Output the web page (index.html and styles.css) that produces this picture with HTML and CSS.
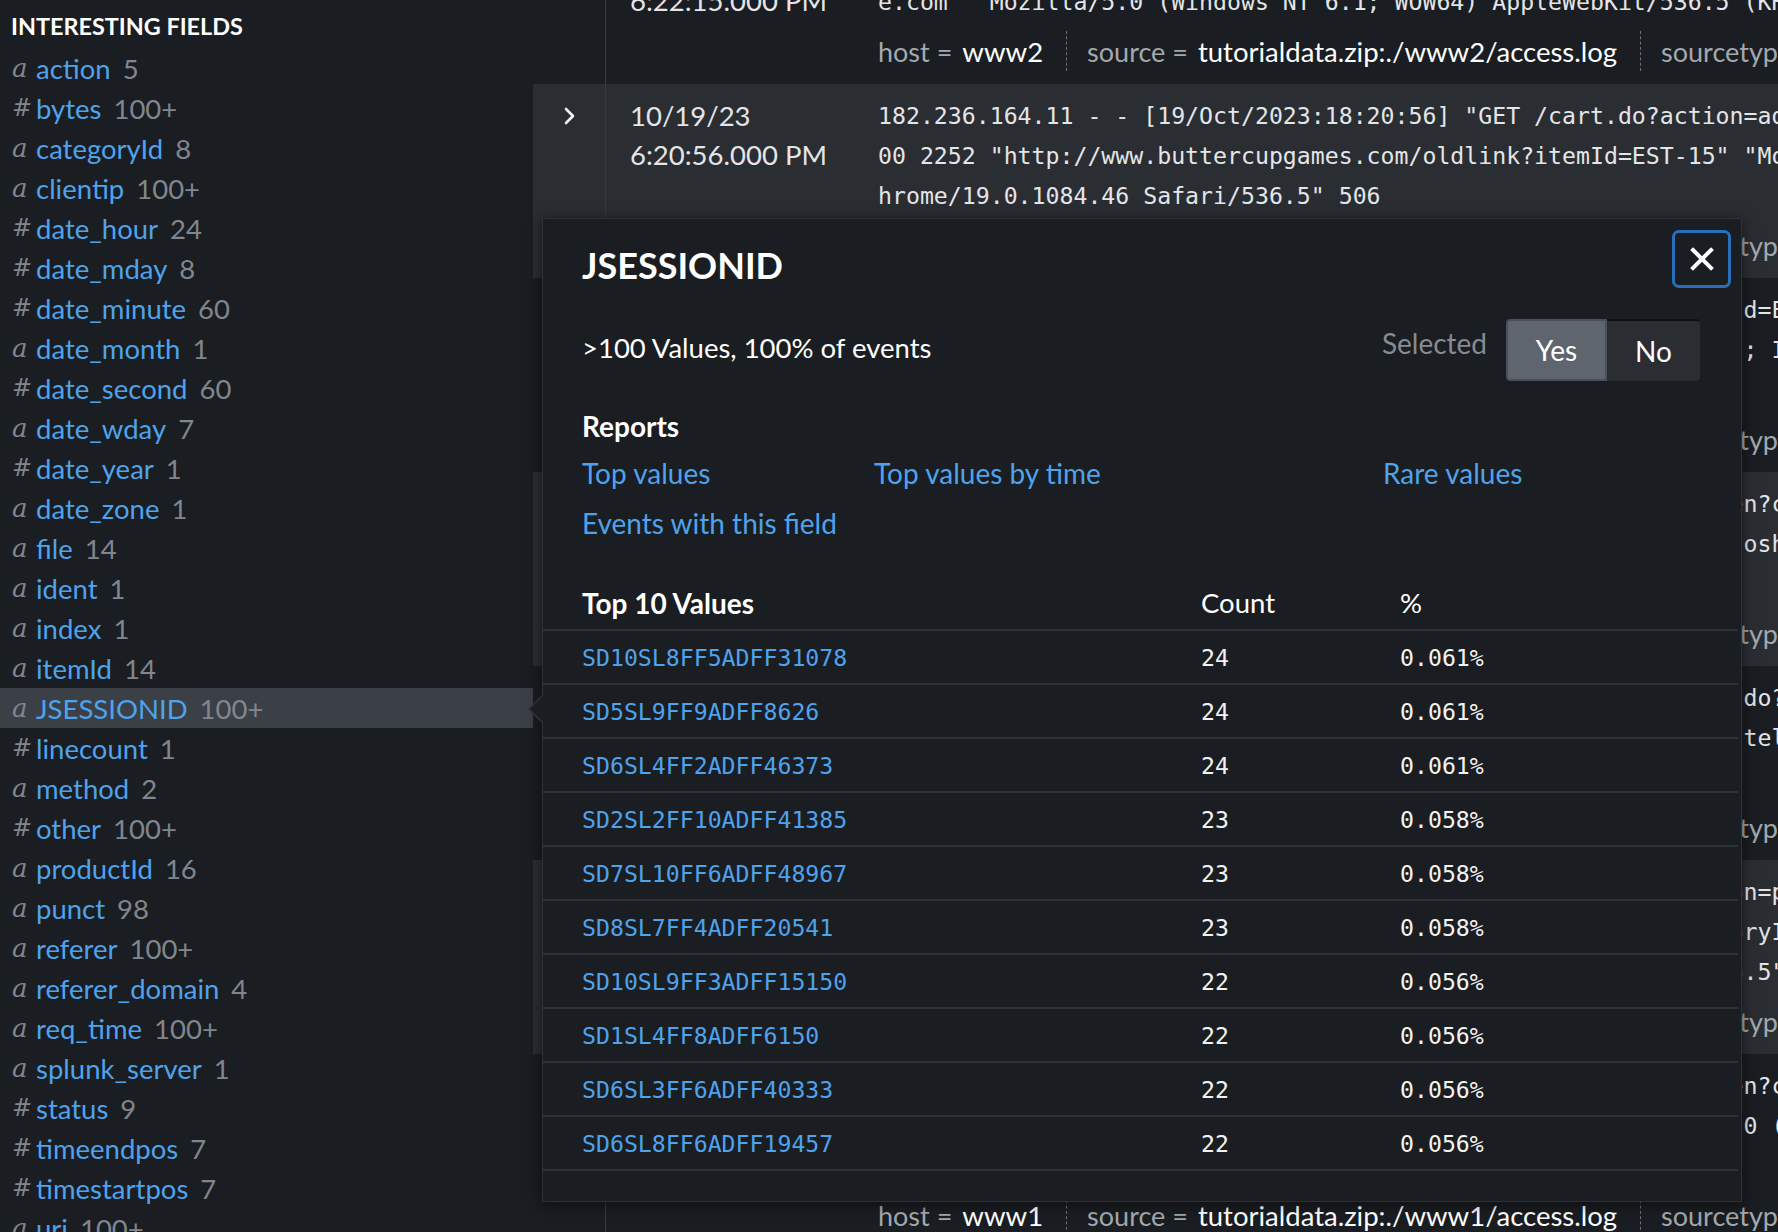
FILE: index.html
```html
<!DOCTYPE html>
<html lang="en">
<head>
<meta charset="utf-8">
<title>Search - JSESSIONID</title>
<link rel="stylesheet" href="styles.css">
</head>
<body>
<div class="app">
  <aside class="sidebar">
    <div class="sb-title">INTERESTING FIELDS</div>
    <ul class="fields">
      <li class="field"><span class="ftype ta">a</span><span class="fname">action</span><span class="fcount">5</span></li>
      <li class="field"><span class="ftype tn">#</span><span class="fname">bytes</span><span class="fcount">100+</span></li>
      <li class="field"><span class="ftype ta">a</span><span class="fname">categoryId</span><span class="fcount">8</span></li>
      <li class="field"><span class="ftype ta">a</span><span class="fname">clientip</span><span class="fcount">100+</span></li>
      <li class="field"><span class="ftype tn">#</span><span class="fname">date_hour</span><span class="fcount">24</span></li>
      <li class="field"><span class="ftype tn">#</span><span class="fname">date_mday</span><span class="fcount">8</span></li>
      <li class="field"><span class="ftype tn">#</span><span class="fname">date_minute</span><span class="fcount">60</span></li>
      <li class="field"><span class="ftype ta">a</span><span class="fname">date_month</span><span class="fcount">1</span></li>
      <li class="field"><span class="ftype tn">#</span><span class="fname">date_second</span><span class="fcount">60</span></li>
      <li class="field"><span class="ftype ta">a</span><span class="fname">date_wday</span><span class="fcount">7</span></li>
      <li class="field"><span class="ftype tn">#</span><span class="fname">date_year</span><span class="fcount">1</span></li>
      <li class="field"><span class="ftype ta">a</span><span class="fname">date_zone</span><span class="fcount">1</span></li>
      <li class="field"><span class="ftype ta">a</span><span class="fname">file</span><span class="fcount">14</span></li>
      <li class="field"><span class="ftype ta">a</span><span class="fname">ident</span><span class="fcount">1</span></li>
      <li class="field"><span class="ftype ta">a</span><span class="fname">index</span><span class="fcount">1</span></li>
      <li class="field"><span class="ftype ta">a</span><span class="fname">itemId</span><span class="fcount">14</span></li>
      <li class="field active"><span class="ftype ta">a</span><span class="fname">JSESSIONID</span><span class="fcount">100+</span></li>
      <li class="field"><span class="ftype tn">#</span><span class="fname">linecount</span><span class="fcount">1</span></li>
      <li class="field"><span class="ftype ta">a</span><span class="fname">method</span><span class="fcount">2</span></li>
      <li class="field"><span class="ftype tn">#</span><span class="fname">other</span><span class="fcount">100+</span></li>
      <li class="field"><span class="ftype ta">a</span><span class="fname">productId</span><span class="fcount">16</span></li>
      <li class="field"><span class="ftype ta">a</span><span class="fname">punct</span><span class="fcount">98</span></li>
      <li class="field"><span class="ftype ta">a</span><span class="fname">referer</span><span class="fcount">100+</span></li>
      <li class="field"><span class="ftype ta">a</span><span class="fname">referer_domain</span><span class="fcount">4</span></li>
      <li class="field"><span class="ftype ta">a</span><span class="fname">req_time</span><span class="fcount">100+</span></li>
      <li class="field"><span class="ftype ta">a</span><span class="fname">splunk_server</span><span class="fcount">1</span></li>
      <li class="field"><span class="ftype tn">#</span><span class="fname">status</span><span class="fcount">9</span></li>
      <li class="field"><span class="ftype tn">#</span><span class="fname">timeendpos</span><span class="fcount">7</span></li>
      <li class="field"><span class="ftype tn">#</span><span class="fname">timestartpos</span><span class="fcount">7</span></li>
      <li class="field"><span class="ftype ta">a</span><span class="fname">uri</span><span class="fcount">100+</span></li>
    </ul>
  </aside>

  <main class="events">
    <div class="event-list">
      <div class="event">
        <div class="ev-toggle"><svg class="chev" viewBox="0 0 12 18" width="12" height="18"><polyline points="2,2 9,9 2,16" /></svg></div>
        <div class="ev-time"><div>10/19/23</div><div>6:22:15.000 PM</div></div>
        <div class="ev-body">
          <div class="raw"><div class="ln">91.205.189.15 - - [19/Oct/2023:18:22:15] "GET /oldlink?itemId=EST-14&amp;JSESSIONID=SD10SL8FF5ADFF31078 HTTP 1.1" 200 1665 "http://www.buttercupgam</div><div class="ln">e.com" "Mozilla/5.0 (Windows NT 6.1; WOW64) AppleWebKit/536.5 (KHTML, like Gecko) Chrome/19.0.1084.46 Safari/536.5" 134</div></div>
          <div class="meta"><span class="k">host =</span><span class="v">www2</span><span class="sep"></span><span class="k">source =</span><span class="v">tutorialdata.zip:./www2/access.log</span><span class="sep"></span><span class="k">sourcetype =</span><span class="v">access_combined_wcookie</span></div>
        </div>
      </div>

      <div class="event alt">
        <div class="ev-toggle"><svg class="chev" viewBox="0 0 12 18" width="12" height="18"><polyline points="2,2 9,9 2,16" /></svg></div>
        <div class="ev-time"><div>10/19/23</div><div>6:20:56.000 PM</div></div>
        <div class="ev-body">
          <div class="raw"><div class="ln">182.236.164.11 - - [19/Oct/2023:18:20:56] "GET /cart.do?action=addtocart&amp;itemId=EST-15&amp;productId=BS-AG-G09&amp;JSESSIONID=SD6SL8FF10ADFF53101 HTTP 1.1" 2</div><div class="ln">00 2252 "http://www.buttercupgames.com/oldlink?itemId=EST-15" "Mozilla/5.0 (Macintosh; Intel Mac OS X 10_7_4) AppleWebKit/536.5 (KHTML, like Gecko) C</div><div class="ln">hrome/19.0.1084.46 Safari/536.5" 506</div></div>
          <div class="meta"><span class="k">host =</span><span class="v">www2</span><span class="sep"></span><span class="k">source =</span><span class="v">tutorialdata.zip:./www2/access.log</span><span class="sep"></span><span class="k">sourcetype =</span><span class="v">access_combined_wcookie</span></div>
        </div>
      </div>

      <div class="event">
        <div class="ev-toggle"><svg class="chev" viewBox="0 0 12 18" width="12" height="18"><polyline points="2,2 9,9 2,16" /></svg></div>
        <div class="ev-time"><div>10/19/23</div><div>6:19:38.000 PM</div></div>
        <div class="ev-body">
          <div class="raw"><div class="ln">121.254.179.199 - - [19/Oct/2023:18:19:38] "GET /oldlink?itemId=EST-11&amp;JSESSIONID=SD4SL3FF7ADFF25871 HTTP 1.1" 408 893 "http://www.but</div><div class="ln">tercupgames.com/oldlink?itemId=EST-11" "Mozilla/5.0 (Macintosh; Intel Mac OS X 10_7_4) AppleWebKit/536.5 (KHTML, like Gecko) Chrome/19.0.1084.46 Safari/</div><div class="ln">536.5" 370</div></div>
          <div class="meta"><span class="k">host =</span><span class="v">www3</span><span class="sep"></span><span class="k">source =</span><span class="v">tutorialdata.zip:./www3/access.log</span><span class="sep"></span><span class="k">sourcetype =</span><span class="v">access_combined_wcookie</span></div>
        </div>
      </div>

      <div class="event alt">
        <div class="ev-toggle"><svg class="chev" viewBox="0 0 12 18" width="12" height="18"><polyline points="2,2 9,9 2,16" /></svg></div>
        <div class="ev-time"><div>10/19/23</div><div>6:18:05.000 PM</div></div>
        <div class="ev-body">
          <div class="raw"><div class="ln">211.166.11.101 - - [19/Oct/2023:18:18:05] "GET /category.screen?categoryId=STRATEGY&amp;JSESSIONID=SD6SL3FF6ADFF40333 HTTP 1.1" 200 1901 "http://ww</div><div class="ln">w.buttercupgames.com/cart.do?action=view" "Mozilla/5.0 (Macintosh; Intel Mac OS X 10_7_4) AppleWebKit/536.5 (KHTML, like Gecko) Chrome/19.0.1084.46 S</div><div class="ln">afari/536.5" 743</div></div>
          <div class="meta"><span class="k">host =</span><span class="v">www1</span><span class="sep"></span><span class="k">source =</span><span class="v">tutorialdata.zip:./www1/access.log</span><span class="sep"></span><span class="k">sourcetype =</span><span class="v">access_combined_wcookie</span></div>
        </div>
      </div>

      <div class="event">
        <div class="ev-toggle"><svg class="chev" viewBox="0 0 12 18" width="12" height="18"><polyline points="2,2 9,9 2,16" /></svg></div>
        <div class="ev-time"><div>10/19/23</div><div>6:16:44.000 PM</div></div>
        <div class="ev-body">
          <div class="raw"><div class="ln">194.215.205.191 - - [19/Oct/2023:18:16:44] "GET /cart/success.do?JSESSIONID=SD5SL9FF9ADFF8626 HTTP 1.1" 200 1812 "http://www.buttercup</div><div class="ln">games.com/cart.do?action=purchase" "Mozilla/5.0 (Macintosh; Intel Mac OS X 10_7_4) AppleWebKit/536.5 (KHTML, like Gecko) Chrome/19.0.1084.46 Saf</div><div class="ln">ari/536.5" 581</div></div>
          <div class="meta"><span class="k">host =</span><span class="v">www2</span><span class="sep"></span><span class="k">source =</span><span class="v">tutorialdata.zip:./www2/access.log</span><span class="sep"></span><span class="k">sourcetype =</span><span class="v">access_combined_wcookie</span></div>
        </div>
      </div>

      <div class="event alt">
        <div class="ev-toggle"><svg class="chev" viewBox="0 0 12 18" width="12" height="18"><polyline points="2,2 9,9 2,16" /></svg></div>
        <div class="ev-time"><div>10/19/23</div><div>6:15:20.000 PM</div></div>
        <div class="ev-body">
          <div class="raw"><div class="ln">128.241.220.82 - - [19/Oct/2023:18:15:20] "POST /cart.do?action=purchase&amp;itemId=EST-18&amp;JSESSIONID=SD1SL4FF8ADFF6150 HTTP 1.1" 200 12</div><div class="ln">03 "http://www.buttercupgames.com/oldlink?itemId=EST-18&amp;categoryId=ARCADE" "Mozilla/5.0 (Windows NT 6.1; WOW64) AppleW</div><div class="ln">ebKit/536.5 (KHTML, like Gecko) Chrome/19.0.1084.46 Safari/536.5" 318</div></div>
          <div class="meta"><span class="k">host =</span><span class="v">www3</span><span class="sep"></span><span class="k">source =</span><span class="v">tutorialdata.zip:./www3/access.log</span><span class="sep"></span><span class="k">sourcetype =</span><span class="v">access_combined_wcookie</span></div>
        </div>
      </div>

      <div class="event">
        <div class="ev-toggle"><svg class="chev" viewBox="0 0 12 18" width="12" height="18"><polyline points="2,2 9,9 2,16" /></svg></div>
        <div class="ev-time"><div>10/19/23</div><div>6:13:47.000 PM</div></div>
        <div class="ev-body">
          <div class="raw"><div class="ln">109.169.32.135 - - [19/Oct/2023:18:13:47] "GET /category.screen?categoryId=TEE&amp;JSESSIONID=SD6SL8FF6ADFF19457 </div><div class="ln">HTTP 1.1" 200 1325 "http://www.buttercupgames.com" "Mozilla/4.0 (compatible; MSIE 6.0; Wi</div><div class="ln">ndows NT 5.1; SV1)" 290</div></div>
          <div class="meta"><span class="k">host =</span><span class="v">www1</span><span class="sep"></span><span class="k">source =</span><span class="v">tutorialdata.zip:./www1/access.log</span><span class="sep"></span><span class="k">sourcetype =</span><span class="v">access_combined_wcookie</span></div>
        </div>
      </div>
    </div>
  </main>

  <section class="popover">
    <div class="pop-head">
      <h2 class="pop-title">JSESSIONID</h2>
      <button class="close-btn" type="button" aria-label="Close">
        <svg viewBox="0 0 24 24" width="24" height="24"><line x1="3" y1="3" x2="21" y2="21"/><line x1="21" y1="3" x2="3" y2="21"/></svg>
      </button>
    </div>
    <div class="pop-summary">
      <span class="summary-text">&gt;100 Values, 100% of events</span>
      <div class="selected">
        <span class="selected-label">Selected</span>
        <div class="toggle">
          <span class="tog tog-yes">Yes</span>
          <span class="tog tog-no">No</span>
        </div>
      </div>
    </div>
    <h3 class="reports-title">Reports</h3>
    <div class="report-links">
      <a class="link">Top values</a>
      <a class="link">Top values by time</a>
      <a class="link">Rare values</a>
      <a class="link">Events with this field</a>
    </div>
    <table class="top-table">
      <thead>
        <tr><th class="c-val">Top 10 Values</th><th class="c-count">Count</th><th class="c-pct">%</th></tr>
      </thead>
      <tbody>
        <tr><td class="c-val">SD10SL8FF5ADFF31078</td><td class="c-count">24</td><td class="c-pct">0.061%</td></tr>
        <tr><td class="c-val">SD5SL9FF9ADFF8626</td><td class="c-count">24</td><td class="c-pct">0.061%</td></tr>
        <tr><td class="c-val">SD6SL4FF2ADFF46373</td><td class="c-count">24</td><td class="c-pct">0.061%</td></tr>
        <tr><td class="c-val">SD2SL2FF10ADFF41385</td><td class="c-count">23</td><td class="c-pct">0.058%</td></tr>
        <tr><td class="c-val">SD7SL10FF6ADFF48967</td><td class="c-count">23</td><td class="c-pct">0.058%</td></tr>
        <tr><td class="c-val">SD8SL7FF4ADFF20541</td><td class="c-count">23</td><td class="c-pct">0.058%</td></tr>
        <tr><td class="c-val">SD10SL9FF3ADFF15150</td><td class="c-count">22</td><td class="c-pct">0.056%</td></tr>
        <tr><td class="c-val">SD1SL4FF8ADFF6150</td><td class="c-count">22</td><td class="c-pct">0.056%</td></tr>
        <tr><td class="c-val">SD6SL3FF6ADFF40333</td><td class="c-count">22</td><td class="c-pct">0.056%</td></tr>
        <tr><td class="c-val">SD6SL8FF6ADFF19457</td><td class="c-count">22</td><td class="c-pct">0.056%</td></tr>
      </tbody>
    </table>
  </section>
</div>
</body>
</html>
```

FILE: styles.css
```css
* { box-sizing: border-box; }

html, body {
  margin: 0;
  padding: 0;
  background: #1a1d21;
}

body {
  font-family: Lato, "Open Sans", "Liberation Sans", sans-serif;
  color: #ffffff;
  font-size: 27.5px;
}

.app {
  position: relative;
  display: flex;
  width: 1778px;
  height: 1232px;
  overflow: hidden;
}

/* ---------- sidebar ---------- */
.sidebar {
  flex: 0 0 533px;
  background: #1a1d21;
  overflow: hidden;
}

.sb-title {
  padding: 12px 0 0 11px;
  line-height: 28px;
  font-size: 23.4px;
  font-weight: 700;
  color: #ffffff;
}

.fields {
  list-style: none;
  margin: 8px 0 0 0;
  padding: 0;
}

.field {
  display: flex;
  align-items: center;
  height: 40px;
  padding-left: 12px;
  white-space: nowrap;
}

.field.active {
  background: #3b3f46;
}

.ftype {
  width: 24px;
  flex: none;
  color: #80868e;
}

.ftype.ta {
  font-family: "DejaVu Serif", "Liberation Serif", serif;
  font-style: italic;
  font-size: 26px;
}

.ftype.tn {
  font-family: "DejaVu Sans", sans-serif;
  font-style: italic;
  font-size: 24px;
}

.fname {
  color: #4ea3ec;
}

.fcount {
  margin-left: 12px;
  color: #80868e;
}

/* ---------- events ---------- */
.events {
  flex: 1 1 auto;
  overflow: hidden;
  background: #1a1d21;
}

.event-list {
  margin-top: -70px;
}

.event {
  display: grid;
  grid-template-columns: 72px 273px 1fr;
  background: #1a1d21;
}

.event.alt {
  background: #2a2d32;
}

.ev-toggle {
  padding-top: 12px;
  display: flex;
  justify-content: center;
  align-items: flex-start;
}

.chev {
  margin-top: 11px;
  margin-left: 2px;
}

.chev polyline {
  fill: none;
  stroke: #f2f2f2;
  stroke-width: 2.6;
  stroke-linecap: round;
  stroke-linejoin: round;
}

.ev-time {
  border-left: 1px solid #353a40;
  padding: 12px 0 0 24px;
  line-height: 39px;
  color: #e3e5e8;
  white-space: nowrap;
}

.ev-body {
  min-width: 0;
  padding: 12px 0 13px 0;
}

.raw {
  font-family: "DejaVu Sans Mono", "Liberation Mono", monospace;
  font-size: 23.2px;
  line-height: 40px;
  color: #e3e5e8;
  white-space: pre;
  overflow: hidden;
}

.ln {
  height: 40px;
}

.meta {
  margin-top: 9px;
  height: 40px;
  display: flex;
  align-items: center;
  white-space: nowrap;
}

.meta .k {
  color: #a3a8ae;
  font-size: 27px;
  margin-right: 10px;
}

.meta .v {
  color: #ffffff;
}

.meta .sep {
  align-self: stretch;
  border-left: 1px dashed #6d7279;
  margin: 0 20px 0 23px;
}

/* ---------- popover ---------- */
.popover {
  position: absolute;
  left: 542px;
  top: 218px;
  width: 1200px;
  background: #1a1d21;
  border: 1px solid #2e3238;
  box-shadow: 0 2px 14px rgba(0, 0, 0, 0.55);
  padding: 11px 0 30px 0;
  z-index: 5;
}

.popover::before,
.popover::after {
  content: "";
  position: absolute;
  top: 475px;
  width: 0;
  height: 0;
  border-style: solid;
}

.popover::before {
  left: -15px;
  border-width: 15px 15px 15px 0;
  border-color: transparent #2e3238 transparent transparent;
}

.popover::after {
  left: -13px;
  top: 476px;
  border-width: 14px 14px 14px 0;
  border-color: transparent #1a1d21 transparent transparent;
}

.pop-head {
  display: flex;
  justify-content: space-between;
  align-items: flex-start;
  padding: 0 10px 0 39px;
}

.pop-title {
  margin: 15px 0 0 0;
  font-size: 36px;
  font-weight: 700;
  line-height: 40px;
  color: #ffffff;
}

.close-btn {
  width: 59px;
  height: 58px;
  border: 3px solid #2a6fba;
  border-radius: 7px;
  background: #1a1d21;
  display: flex;
  align-items: center;
  justify-content: center;
  padding: 0;
  margin: 0;
}

.close-btn line {
  stroke: #ffffff;
  stroke-width: 4;
  stroke-linecap: square;
}

.pop-summary {
  display: flex;
  justify-content: space-between;
  align-items: center;
  margin-top: 31px;
  padding: 0 41px 0 39px;
  height: 62px;
}

.summary-text {
  color: #ffffff;
  margin-bottom: 6px;
}

.selected {
  display: flex;
  align-items: center;
}

.selected-label {
  color: #868b92;
  font-size: 28px;
  margin-right: 19px;
  margin-bottom: 14px;
}

.toggle {
  display: flex;
  height: 62px;
  border-radius: 4px;
  overflow: hidden;
}

.tog {
  display: flex;
  align-items: center;
  justify-content: center;
  color: #ffffff;
  font-size: 28px;
}

.tog-yes {
  width: 101px;
  background: #5e656f;
  border: 2px solid #4a5059;
  border-radius: 4px 0 0 4px;
}

.tog-no {
  width: 93px;
  background: #2a2d32;
  border-top: 2px solid #0e0f11;
  border-radius: 0 4px 4px 0;
}

.reports-title {
  margin: 30px 0 0 0;
  padding-left: 39px;
  font-size: 28px;
  font-weight: 700;
  line-height: 30px;
  color: #ffffff;
}

.report-links {
  display: grid;
  grid-template-columns: 292px 509px auto;
  grid-auto-rows: 50px;
  align-items: center;
  margin-top: 7px;
  padding-left: 39px;
  font-size: 28px;
}

.link {
  color: #4ea3ec;
  white-space: nowrap;
}

.top-table {
  margin-top: 28px;
  width: calc(100% - 3px);
  border-collapse: collapse;
}

.top-table th {
  height: 54px;
  text-align: left;
  font-weight: 400;
  color: #ffffff;
  padding: 0;
  border-bottom: 2px solid #2e3237;
}

.top-table th.c-val {
  font-weight: 700;
  font-size: 28px;
}

.top-table td {
  height: 54px;
  padding: 0;
  border-bottom: 2px solid #2e3237;
  font-family: "DejaVu Sans Mono", "Liberation Mono", monospace;
  font-size: 23.2px;
  color: #f2f2f2;
}

.top-table .c-val {
  padding-left: 39px;
  width: 658px;
}

.top-table td.c-val {
  color: #4ea3ec;
}

.top-table .c-count {
  width: 199px;
}
```
